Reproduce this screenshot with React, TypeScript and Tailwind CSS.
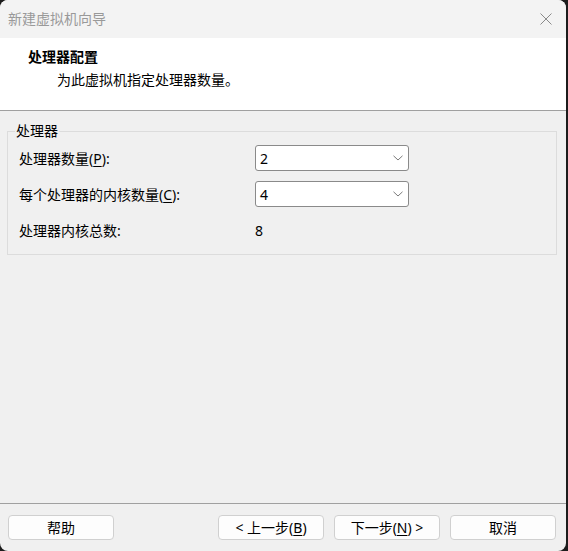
const font = '"Noto Sans", "Noto Sans CJK SC", sans-serif';

function Chevron() {
  return (
    <svg width="10" height="6" viewBox="0 0 10 6" className="text-[#7a7a7a]">
      <path d="M0.5 0.8 L5 5 L9.5 0.8" fill="none" stroke="currentColor" strokeWidth="1" />
    </svg>
  );
}

function Select({ value }: { value: string }) {
  return (
    <div className="w-[154px] h-[26px] flex items-center justify-between bg-white border border-[#8a8a8a] rounded-[3px] pl-[4px] pr-[5px]">
      <span>{value}</span>
      <Chevron />
    </div>
  );
}

function Button({ children }: { children: React.ReactNode }) {
  return (
    <button className="w-[106px] h-[25px] flex items-center justify-center bg-[#fdfdfd] border border-[#d0d0d0] rounded-[4px] text-[14px] text-black">
      {children}
    </button>
  );
}

export default function App() {
  return (
    <div className="w-[568px] h-[551px] bg-[#1c1c1c] flex" style={{ fontFamily: font }}>
      <div className="w-[566px] h-full rounded-[8px] overflow-hidden flex flex-col bg-[#f0f0f0] text-[14px] text-black">
        {/* title bar */}
        <div className="h-[38px] bg-[#f3f3f3] flex items-center justify-between pl-[8px] pr-[14px]">
          <span className="text-[#999999] leading-[20px]">新建虚拟机向导</span>
          <svg width="12" height="12" viewBox="0 0 12 12" className="text-[#8a8a8a]">
            <path d="M0.5 0.5 L11.5 11.5 M11.5 0.5 L0.5 11.5" stroke="currentColor" strokeWidth="1" />
          </svg>
        </div>

        {/* header */}
        <div className="h-[73px] bg-white border-b border-[#a0a0a0] pt-[9px]">
          <div className="pl-[28px] font-bold leading-[20px]">处理器配置</div>
          <div className="pl-[57px] mt-[3px] leading-[20px]">为此虚拟机指定处理器数量。</div>
        </div>

        {/* body */}
        <div className="flex-1 px-[7px] pt-[20px]">
          <div className="relative w-[550px] border border-[#dcdcdc] pt-[13px] pb-[11px] pl-[11px]">
            <span className="absolute -top-[11px] left-[7px] px-[1px] bg-[#f0f0f0] leading-[20px]">处理器</span>
            <div className="grid grid-cols-[236px_1fr] gap-y-[10px] items-center">
              <div className="h-[26px] flex items-center">
                处理器数量(<span className="underline underline-offset-2">P</span>):
              </div>
              <Select value="2" />
              <div className="h-[26px] flex items-center">
                每个处理器的内核数量(<span className="underline underline-offset-2">C</span>):
              </div>
              <Select value="4" />
              <div className="h-[26px] flex items-center">处理器内核总数:</div>
              <div className="h-[26px] flex items-center">8</div>
            </div>
          </div>
        </div>

        {/* footer */}
        <div className="h-[48px] border-t border-[#a0a0a0] pt-[11px] pl-[8px] pr-[10px] flex">
          <Button>帮助</Button>
          <div className="flex-1" />
          <div className="flex gap-[10px]">
            <Button>
              &lt; 上一步(<span className="underline underline-offset-2">B</span>)
            </Button>
            <Button>
              下一步(<span className="underline underline-offset-2">N</span>) &gt;
            </Button>
            <Button>取消</Button>
          </div>
        </div>
      </div>
    </div>
  );
}
